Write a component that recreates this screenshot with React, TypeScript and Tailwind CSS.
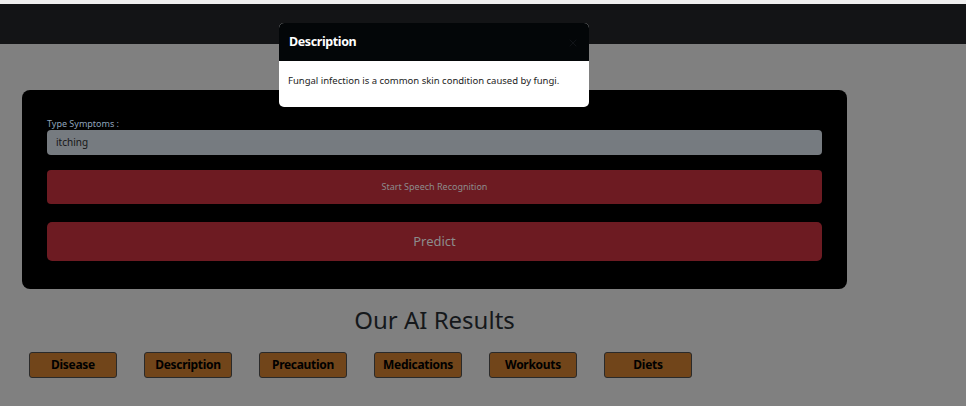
import { X } from "lucide-react";

const resultTabs = ["Disease", "Description", "Precaution", "Medications", "Workouts", "Diets"];

const App = () => {
  return (
    <div
      className="relative w-[966px] h-[406px] overflow-hidden bg-[#808080]"
      style={{ fontFamily: '"Noto Sans", "Open Sans", sans-serif' }}
    >
      {/* top strip + navbar */}
      <div className="h-[4px] bg-[#efefef]" />
      <nav className="h-[40px] bg-[#131416]" />

      {/* main */}
      <div className="ml-[22px] w-[825px]">
        <div className="mt-[46px] bg-black rounded-lg px-[25px] pt-[28px] pb-[28px]">
          <label className="block text-[9px] leading-[12px] text-[#8ea3bb]">Type Symptoms :</label>
          <div className="h-[25px] bg-[#767b80] rounded-[4px] flex items-center px-[9px] text-[10px] text-[#151515]">
            itching
          </div>
          <button className="mt-[15px] w-full h-[34px] bg-[#6d1b22] rounded-[4px] text-[9px] text-[#8c8c8c]">
            Start Speech Recognition
          </button>
          <button className="mt-[18px] w-full h-[39px] bg-[#6d1b22] rounded-[5px] text-[13px] text-[#8c8c8c]">
            Predict
          </button>
        </div>

        <h2 className="mt-[14px] text-center text-[24px] leading-[34px] text-[#15181b]">Our AI Results</h2>

        <div className="mt-[15px] pl-[7px] flex gap-[27px]">
          {resultTabs.map((tab) => (
            <button
              key={tab}
              className="w-[88px] h-[26px] bg-[#71451a] border border-[#2a2a2a] rounded-[3px] text-[12px] font-bold text-black tracking-[-0.3px]"
            >
              {tab}
            </button>
          ))}
        </div>
      </div>

      {/* modal */}
      <div className="absolute left-[279px] top-[23px] w-[310px] rounded-[5px] overflow-hidden bg-white">
        <div className="h-[38px] bg-[#030608] flex items-center justify-between px-[10px] pt-[1px]">
          <span className="text-[12.5px] font-bold text-white tracking-[-0.4px]">Description</span>
          <X className="w-[12px] h-[12px] text-[#111418]" />
        </div>
        <div className="h-[46px] px-[9px] pt-[13px] text-[9.5px] text-[#222]">
          Fungal infection is a common skin condition caused by fungi.
        </div>
      </div>
    </div>
  );
};

export default App;
